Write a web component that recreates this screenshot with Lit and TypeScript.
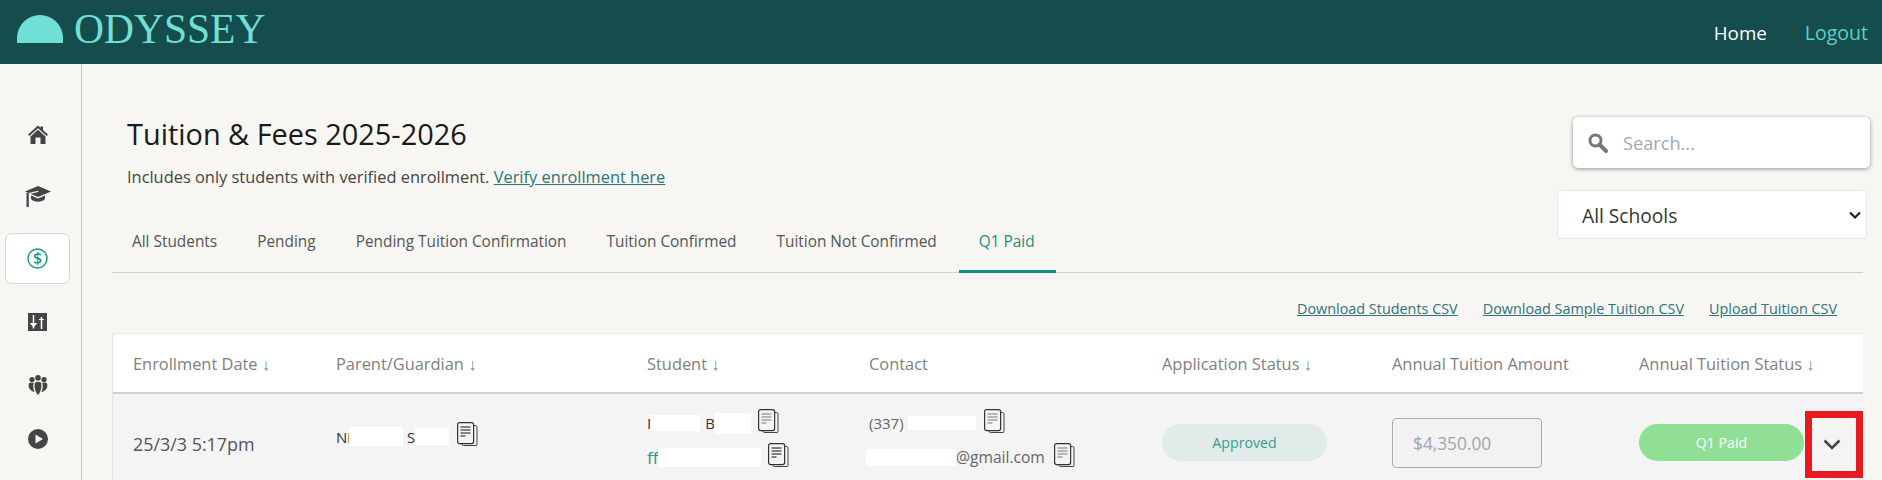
import { html, css, LitElement, svg } from 'lit'
import { customElement } from 'lit/decorators.js'

const copyIcon = (dark = false, gap = 7) => html`
  <svg class="copy" style="margin-left:${gap}px" width="21" height="24" viewBox="0 0 21 24" fill="none">
    <path d="M17 3.5h1.5a1.5 1.5 0 0 1 1.5 1.5v17.500a1 1 0 0 1-1 1H6.500a1.500 1.500 0 0 1-1.500-1.500v-.500" stroke="#444" stroke-width="1"/>
    <rect x="0.600" y="0.600" width="16" height="21" rx="2" fill="#f4f4f4" stroke="#333" stroke-width="1.200"/>
    <g stroke=${dark ? '#111' : '#777'} stroke-width="1.200">
      <path d="M3.500 5h10M3.500 8h10M3.500 11h10M3.500 14h5"/>
    </g>
  </svg>
`

// white blocks that cover the personal data in the row
const hide = (w: number, h: number, gap = 0) => html`
  <span class="hide" style="width:${w}px;height:${h}px;margin-left:${gap}px"></span>
`

const icons = {
  home: svg`<path d="M11 1.500 L13.500 3.700 V2.500 H16 V6 L21 10.500 L19.700 12 L11 4.200 L2.300 12 L1 10.500 Z"/><path fill-rule="evenodd" d="M11 5.800 L18.500 12.500 V20 H3.500 V12.500 Z M8.500 13.500 V20 H13.500 V13.500 Z"/>`,
  cap: svg`<path d="M13 1 L26 6.500 L13 12 L5.500 8.800 L13.500 7 L13 5.800 L3.500 8 L0 6.500 Z"/><path d="M6 10.500 L13 13.500 L20 10.500 V14 C17 17.500 9 17.500 6 14 Z"/><path d="M1.500 7.800 H3.800 V22 H1.500 Z"/>`,
  sliders: svg`<rect width="19" height="18"/><g stroke="#fff" stroke-width="1.500" fill="#fff"><path d="M5.500 2 V15.500 M13.500 4 V16"/><path d="M3 10.500 H8 L5.500 13.500 Z M11 6.500 H16" stroke-width="1.200"/></g>`,
  people: svg`<circle cx="4" cy="4.500" r="2.600"/><circle cx="16" cy="4.500" r="2.600"/><circle cx="10" cy="2.800" r="2.800"/><path d="M1 8.500 C1.500 7.500 5 7 5.800 8 C4.800 11 5.200 14 6.500 17 C3 16.500 -0.500 13 1 8.500 Z"/><path d="M19 8.500 C18.500 7.500 15 7 14.200 8 C15.200 11 14.800 14 13.500 17 C17 16.500 20.500 13 19 8.500 Z"/><path d="M7 7.500 C8.500 6.500 11.500 6.500 13 7.500 C14 11.500 13 17 10 20 C7 17 6 11.500 7 7.500 Z"/>`,
  play: svg`<path fill-rule="evenodd" d="M10 0 A10 10 0 1 1 10 20 A10 10 0 1 1 10 0 Z M7.500 5.500 V14.500 L15 10 Z"/>`
}

const navIcon = (name: keyof typeof icons, w: number, h: number) => html`
  <svg width=${w} height=${h} viewBox="0 0 ${w} ${h}" fill="#444">${icons[name]}</svg>
`

@customElement('app-root')
export class AppRoot extends LitElement {
  static styles = css`
    :host {
      display: block;
      height: 480px;
      overflow: hidden;
      background: #f7f6f3;
      font-family: "Open Sans", sans-serif;
      color: #333;
    }

    .topbar {
      height: 64px;
      background: #154d4c;
      display: flex;
      align-items: center;
      justify-content: space-between;
      padding: 0 14px 0 17px;
    }
    .brand {
      display: flex;
      align-items: flex-start;
      gap: 11px;
      height: 64px;
      color: #70dfd5;
      font-family: "Liberation Serif", serif;
      font-size: 41.500px;
      line-height: 58px;
    }
    .brand svg { margin-top: 15px; }
    .topnav {
      display: flex;
      align-items: baseline;
      gap: 38px;
      font-size: 18.800px;
      color: #fff;
    }
    .topnav .out { color: #5fd0c5; font-size: 19.500px; }

    .layout {
      display: flex;
      height: 416px;
    }
    .side {
      width: 81px;
      flex: none;
      border-right: 1px solid #c8c8c8;
      display: flex;
      flex-direction: column;
      align-items: center;
      padding-top: 45px;
      gap: 11px;
    }
    .side .item {
      width: 65px;
      height: 51px;
      flex: none;
      margin-left: -6px;
      box-sizing: border-box;
      display: flex;
      align-items: center;
      justify-content: center;
      border: 1px solid transparent;
      border-radius: 7px;
    }
    .side .item.active {
      background: #fff;
      border-color: #d5d5d5;
    }
    .side .nudge { margin-top: 1px; }
    .side .last { margin-top: -8px; }

    .main {
      flex: 1;
      padding: 0 19px 0 30px;
      min-width: 0;
    }
    .head {
      display: grid;
      grid-template-columns: 1fr auto;
      border-bottom: 1px solid #cfcfcf;
      height: 208px;
    }
    h1 {
      margin: 50px 0 0 15px;
      font-size: 28.900px;
      font-weight: 400;
      line-height: 40px;
      color: #1a1a1a;
    }
    .sub {
      margin: 12px 0 0 15px;
      font-size: 16.400px;
      line-height: 22px;
      color: #444;
    }
    a {
      color: #2e7478;
      text-decoration: underline;
    }
    .tabs {
      display: flex;
      margin-top: 38px;
    }
    .tab {
      padding: 0 20px;
      height: 47px;
      box-sizing: border-box;
      font-size: 15.400px;
      line-height: 32px;
      color: #555;
      border-bottom: 3px solid transparent;
      white-space: nowrap;
    }
    .tab.on {
      color: #1b8f80;
      border-bottom-color: #128c7e;
      margin-left: 2px;
      padding: 0 21px 0 20px;
    }
    .controls {
      display: flex;
      flex-direction: column;
      align-items: flex-end;
      padding-top: 53px;
      gap: 22px;
      width: 310px;
    }
    .search {
      width: 297px;
      height: 51px;
      flex: none;
      box-sizing: border-box;
      margin-right: -7px;
      background: #fff;
      border-radius: 5px;
      box-shadow: 0 1px 4px rgba(0, 0, 0, 0.4);
      display: flex;
      align-items: center;
      padding-left: 15px;
      gap: 15px;
      font-size: 18.200px;
      color: #a0a8b8;
    }
    .select {
      width: 310px;
      height: 49px;
      flex: none;
      box-sizing: border-box;
      margin-right: -4px;
      background: #fff;
      border: 1px solid #e8e8e8;
      border-radius: 5px;
      display: flex;
      align-items: center;
      justify-content: space-between;
      padding: 2px 5px 0 24px;
      font-size: 19.200px;
      color: #333;
    }

    .csv {
      display: flex;
      justify-content: flex-end;
      gap: 25px;
      height: 60px;
      padding: 27px 26px 0 0;
      box-sizing: border-box;
      font-size: 14.400px;
      line-height: 18px;
    }

    .table {
      width: 1751px;
      border-top: 1px solid #e6e6e6;
      border-left: 1px solid #e6e6e6;
      box-sizing: border-box;
    }
    .row {
      display: grid;
      grid-template-columns: 202px 311px 222px 293px 230px 248px 244px;
    }
    .row.top {
      height: 60px;
      background: #fff;
      border-bottom: 2px solid #d0d0d0;
      box-sizing: border-box;
      align-items: center;
      font-size: 16.400px;
      color: #808080;
    }
    .row.top > div,
    .row.data > div {
      padding-left: 21px;
      white-space: nowrap;
    }
    .row.top > div:first-child,
    .row.data > div:first-child,
    .row.top > div:last-child,
    .row.data > div:last-child {
      padding-left: 20px;
    }
    .row.data {
      height: 100px;
      box-sizing: border-box;
      background: #f4f4f4;
      align-items: center;
      color: #555;
      font-size: 17.900px;
    }
    .parent { margin-bottom: 15px; }
    .stack { margin-bottom: 8px; }
    .line {
      display: flex;
      align-items: center;
      font-size: 15px;
      color: #333;
      height: 24px;
    }
    .line + .line { margin-top: 10px; }
    .line.grey { color: #666; }
    .line .mail { font-size: 15.600px; }
    .line .teal { color: #1b9a8a; font-size: 17px; }
    .hide {
      display: inline-block;
      background: #fff;
    }
    .copy { flex: none; margin-top: -5px; }
    .pill {
      width: 165px;
      height: 37px;
      border-radius: 19px;
      display: flex;
      align-items: center;
      justify-content: center;
      font-size: 14.200px;
      margin-bottom: 4px;
    }
    .pill.ok {
      background: #e1ebe9;
      color: #3a9c8e;
    }
    .pill.paid {
      background: #8fdf95;
      color: #fff;
    }
    .money {
      width: 150px;
      height: 50px;
      box-sizing: border-box;
      margin-bottom: 2px;
      border: 1px solid #a8acb8;
      border-radius: 4px;
      background: #f2f2f3;
      display: flex;
      align-items: center;
      padding-left: 20px;
      font-size: 17.300px;
      color: #a0a4b0;
    }
    .last-cell {
      display: flex;
      align-items: center;
      gap: 1px;
    }
    .toggle {
      width: 58px;
      height: 67px;
      flex: none;
      box-sizing: border-box;
      border: solid #e8191f;
      border-width: 7px;
      display: flex;
      align-items: center;
      justify-content: center;
      padding-right: 5px;
    }
  `

  render () {
    return html`
      <div class="topbar">
        <div class="brand">
          <svg width="46" height="28" viewBox="0 0 46 28"><path d="M0 28 V23 A23 23 0 0 1 46 23 V28 Z" fill="#70dfd5"/></svg>
          <span>ODYSSEY</span>
        </div>
        <div class="topnav"><span>Home</span><span class="out">Logout</span></div>
      </div>
      <div class="layout">
        <nav class="side">
          <div class="item">${navIcon('home', 22, 21)}</div>
          <div class="item">${navIcon('cap', 26, 23)}</div>
          <div class="item active">
            <svg width="21" height="21" viewBox="0 0 21 21">
              <circle cx="10.500" cy="10.500" r="9.500" fill="none" stroke="#1b9a8a" stroke-width="1.500"/>
              <text x="10.500" y="16" text-anchor="middle" font-size="16" font-weight="600" font-family="Open Sans" fill="#1b9a8a">$</text>
            </svg>
          </div>
          <div class="item nudge">${navIcon('sliders', 19, 18)}</div>
          <div class="item nudge">${navIcon('people', 20, 20)}</div>
          <div class="item last">${navIcon('play', 20, 20)}</div>
        </nav>
        <main class="main">
          <div class="head">
            <div>
              <h1>Tuition &amp; Fees 2025-2026</h1>
              <p class="sub">Includes only students with verified enrollment. <a>Verify enrollment here</a></p>
              <div class="tabs">
                ${['All Students', 'Pending', 'Pending Tuition Confirmation', 'Tuition Confirmed', 'Tuition Not Confirmed'].map(t => html`<div class="tab">${t}</div>`)}
                <div class="tab on">Q1 Paid</div>
              </div>
            </div>
            <div class="controls">
              <div class="search">
                <svg width="20" height="20" viewBox="0 0 20 20" fill="none" stroke="#777"><circle cx="7.500" cy="7.500" r="5.500" stroke-width="3"/><path d="M11.500 11.500 L18 18" stroke-width="4" stroke-linecap="round"/></svg>
                <span>Search...</span>
              </div>
              <div class="select">
                <span>All Schools</span>
                <svg width="12" height="9" viewBox="0 0 12 9" fill="none" stroke="#222" stroke-width="2.200"><path d="M1 1.500 L6 6.500 L11 1.500"/></svg>
              </div>
            </div>
          </div>
          <div class="csv">
            <a>Download Students CSV</a>
            <a>Download Sample Tuition CSV</a>
            <a>Upload Tuition CSV</a>
          </div>
          <div class="table">
            <div class="row top">
              <div>Enrollment Date ↓</div>
              <div>Parent/Guardian ↓</div>
              <div>Student ↓</div>
              <div>Contact</div>
              <div>Application Status ↓</div>
              <div>Annual Tuition Amount</div>
              <div>Annual Tuition Status ↓</div>
            </div>
            <div class="row data">
              <div>25/3/3 5:17pm</div>
              <div class="parent">
                <div class="line">Ni${hide(54, 19, -2)}<span style="margin-left:4px">S</span>${hide(34, 17)}${copyIcon(true, 8)}</div>
              </div>
              <div class="stack">
                <div class="line">I${hide(49, 16)}<span style="margin-left:5px">B</span>${hide(37, 21, -1)}${copyIcon()}</div>
                <div class="line"><span class="teal">ff</span>${hide(103, 19)}${copyIcon(true)}</div>
              </div>
              <div class="stack">
                <div class="line grey">(337)${hide(68, 14, 4)}${copyIcon(false, 8)}</div>
                <div class="line grey">${hide(90, 17, -3)}<span class="mail">@gmail.com</span>${copyIcon(false, 9)}</div>
              </div>
              <div><div class="pill ok">Approved</div></div>
              <div><div class="money">$4,350.00</div></div>
              <div class="last-cell">
                <div class="pill paid">Q1 Paid</div>
                <div class="toggle">
                  <svg width="18" height="11" viewBox="0 0 18 11" fill="none" stroke="#444" stroke-width="2.500"><path d="M1.500 1.500 L9 9 L16.500 1.500"/></svg>
                </div>
              </div>
            </div>
          </div>
        </main>
      </div>
    `
  }
}
